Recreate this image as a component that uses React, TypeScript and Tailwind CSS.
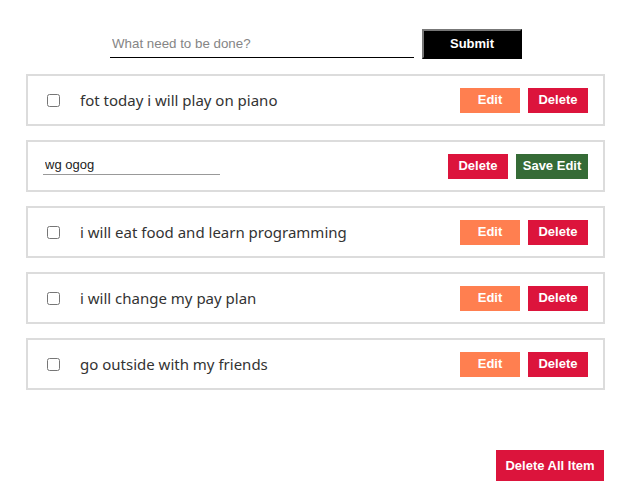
import React from 'react';

const todos = [
  { id: 1, text: 'fot today i will play on piano', editing: false },
  { id: 2, text: 'wg ogog', editing: true },
  { id: 3, text: 'i will eat food and learn programming', editing: false },
  { id: 4, text: 'i will change my pay plan', editing: false },
  { id: 5, text: 'go outside with my friends', editing: false },
];

const btn =
  "h-[25px] text-[13px] font-bold text-white font-['Liberation_Sans',Arial,sans-serif]";

const App = () => {
  return (
    <div className="min-h-[491px] w-[622px] bg-white">
      <form className="flex justify-center gap-2 pl-[10px] pt-[29px]">
        <input
          type="text"
          placeholder="What need to be done?"
          className="h-[29px] w-[304px] border-b border-black px-[2px] text-[13.33px] font-['Liberation_Sans',Arial,sans-serif] outline-none placeholder:text-[#858585]"
        />
        <button
          type="button"
          className="h-[30px] w-[100px] border-2 border-b-black border-l-[#777] border-r-black border-t-[#777] bg-black text-[13px] font-bold text-white font-['Liberation_Sans',Arial,sans-serif]"
        >
          Submit
        </button>
      </form>

      <ul className="ml-[26px] mt-[15px] flex w-[579px] flex-col gap-[14px]">
        {todos.map((todo) => (
          <li
            key={todo.id}
            className="flex h-[52px] items-center border-2 border-[#dcdcdc] pr-[15px]"
          >
            {todo.editing ? (
              <>
                <input
                  type="text"
                  defaultValue={todo.text}
                  className="ml-[15px] mt-[-2px] h-[20px] w-[177px] border-b border-[#999] px-[2px] text-[13px] text-[#222] font-['Liberation_Sans',Arial,sans-serif] outline-none"
                />
                <div className="ml-auto flex gap-2">
                  <button type="button" className={clsx(btn, 'w-[60px] bg-[#dc143c]')}>
                    Delete
                  </button>
                  <button type="button" className={clsx(btn, 'w-[72px] bg-[#356b36]')}>
                    Save Edit
                  </button>
                </div>
              </>
            ) : (
              <>
                <input
                  type="checkbox"
                  className="ml-[19px] h-[13px] w-[13px] accent-[#555]"
                />
                <span className="ml-[20px] text-[15px] text-[#333] font-['Noto_Sans','Open_Sans',sans-serif]">
                  {todo.text}
                </span>
                <div className="ml-auto flex gap-2">
                  <button type="button" className={clsx(btn, 'w-[60px] bg-[#ff7f50]')}>
                    Edit
                  </button>
                  <button type="button" className={clsx(btn, 'w-[60px] bg-[#dc143c]')}>
                    Delete
                  </button>
                </div>
              </>
            )}
          </li>
        ))}
      </ul>

      <div className="ml-[26px] mt-[60px] flex w-[578px] justify-end">
        <button type="button" className="h-[31px] w-[108px] bg-[#dc143c] text-[13px] font-bold text-white font-['Liberation_Sans',Arial,sans-serif]">
          Delete All Item
        </button>
      </div>
    </div>
  );
};

function clsx(...c: string[]) {
  return c.join(' ');
}

export default App;
